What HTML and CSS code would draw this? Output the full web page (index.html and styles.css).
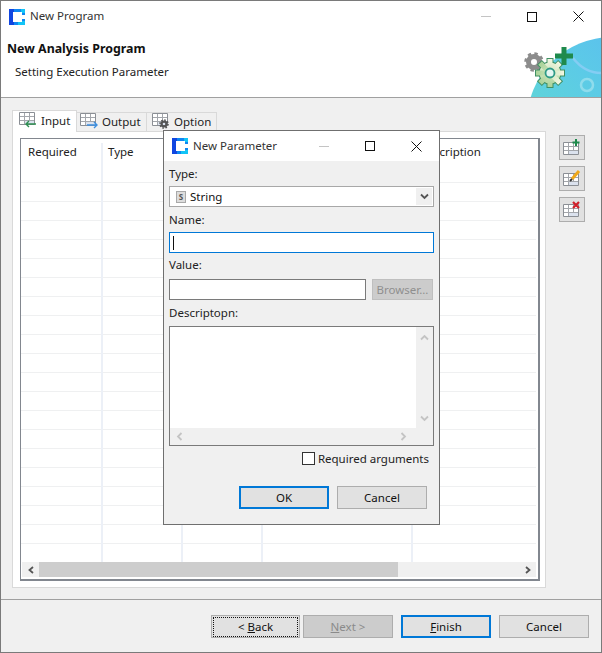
FILE: index.html

```html
<!DOCTYPE html>
<html>
<head>
	<meta charset="utf-8">
	<title>New Program</title>
	<link rel="stylesheet" href="styles.css">
</head>
<body>
<svg class="defs" width="0" height="0">
	<symbol id="logo" viewBox="0 0 16 16">
		<rect width="16" height="16" fill="#0f86f2"/>
		<path d="M0 0h5v4H4v8h1v4H0z" fill="#1146e0"/>
		<path d="M9 12h7v4H9zM12 0h4v4h-4z" fill="#12c4f6"/>
		<path d="M4 3h9v3h3v4h-3v3H4z" fill="#fff"/>
	</symbol>
	<symbol id="grid" viewBox="0 0 16 14">
		<path d="M.5.5h15v12H.5z" fill="#fff" stroke="#8b8f95"/>
		<path d="M1 4.500h14M1 8.500h14M5.500 1v11M10.500 1v11" stroke="#a3a6ab"/>
		<path d="M6 9h9v3H6z" fill="#dbe2ee"/>
	</symbol>
	<g id="cog">
		<circle cx="29" cy="41" r="10.500"/>
		<rect x="26.500" y="27" width="5" height="28"/>
		<rect x="26.500" y="27" width="5" height="28" transform="rotate(45 29 41)"/>
		<rect x="26.500" y="27" width="5" height="28" transform="rotate(90 29 41)"/>
		<rect x="26.500" y="27" width="5" height="28" transform="rotate(135 29 41)"/>
	</g>
</svg>
<div class="window">
	<div class="titlebar">
		<svg class="logo"><use href="#logo"/></svg>
		<span class="title">New Program</span>
		<span class="ctrl ctrl-min"><i></i></span>
		<span class="ctrl ctrl-max"><i></i></span>
		<span class="ctrl ctrl-close">
			<svg width="11" height="11" viewBox="0 0 11 11"><path d="M.5.5l10 10M10.500.5l-10 10" stroke="#111" fill="none"/></svg>
		</span>
	</div>
	<div class="banner">
		<div class="banner-text">
			<h1>New Analysis Program</h1>
			<p>Setting Execution Parameter</p>
		</div>
		<svg class="banner-art" width="80" height="66" viewBox="0 0 80 66">
			<defs>
				<linearGradient id="sky" x1="0" y1="1" x2="1" y2="0">
					<stop offset="0" stop-color="#62e0c8"/>
					<stop offset="0.55" stop-color="#5ccbe6"/>
					<stop offset="1" stop-color="#5ab6f6"/>
				</linearGradient>
				<linearGradient id="leaf" gradientUnits="userSpaceOnUse" x1="0" y1="27" x2="0" y2="55">
					<stop offset="0" stop-color="#f2f7e2"/>
					<stop offset="1" stop-color="#a8d298"/>
				</linearGradient>
			</defs>
			<circle cx="91" cy="90" r="85" fill="url(#sky)"/>
			<circle cx="66" cy="53" r="6" fill="none" stroke="#8fdcec" stroke-width="2.500"/>
			<path d="M52 26c7 9 16 15 28 15" fill="none" stroke="#84cdf3" stroke-width="2.500"/>
			<circle cx="13" cy="30" r="5.500" fill="none" stroke="#8c8c8c" stroke-width="5"/>
			<circle cx="13" cy="30" r="8" fill="none" stroke="#8c8c8c" stroke-width="3.500" stroke-dasharray="3.200 3.100"/>
			<use href="#cog" fill="#3f8f63" stroke="#3f8f63" stroke-width="2"/>
			<use href="#cog" fill="url(#leaf)"/>
			<circle cx="29" cy="41" r="4.500" fill="#e4f6f2" stroke="#2e9a86" stroke-width="1.800"/>
			<path d="M34 24h18M43 15v18" stroke="#1f8a4c" stroke-width="5" fill="none"/>
		</svg>
	</div>
	<div class="content">
		<div class="folder">
			<div class="tabs">
				<div class="tab tab-on">
					<svg class="tab-icon" viewBox="0 0 18 16">
						<use href="#grid" width="16" height="14"/>
						<path d="M17 12H7M10 9l-3 3 3 3" fill="none" stroke="#2f8f52" stroke-width="1.400"/>
					</svg>Input</div>
				<div class="tab">
					<svg class="tab-icon" viewBox="0 0 18 16">
						<use href="#grid" width="16" height="14"/>
						<path d="M7 12h10M14 9l3 3-3 3" fill="none" stroke="#3d8fe0" stroke-width="1.400"/>
					</svg>Output</div>
				<div class="tab tab-opt">
					<svg class="tab-icon" viewBox="0 0 18 16">
						<use href="#grid" width="16" height="14"/>
						<circle cx="12" cy="11" r="2.400" fill="none" stroke="#555" stroke-width="2.200"/>
						<circle cx="12" cy="11" r="4" fill="none" stroke="#555" stroke-width="1.600" stroke-dasharray="1.600 1.500"/>
					</svg>Option</div>
			</div>
			<div class="panel">
				<div class="table">
					<div class="table-cols">
						<div class="col col-a"><span class="th">Required</span></div>
						<div class="col col-b"><span class="th">Type</span></div>
						<div class="col col-c"></div>
						<div class="col col-d"></div>
						<div class="col col-e"><span class="th">Description</span></div>
					</div>
					<div class="hscroll">
						<span class="arrow">
							<svg width="8" height="8" viewBox="0 0 8 8"><path d="M6 1L2.500 4 6 7" fill="none" stroke="#555" stroke-width="1.800"/></svg>
						</span>
						<span class="track"><span class="thumb"></span></span>
						<span class="arrow">
							<svg width="8" height="8" viewBox="0 0 8 8"><path d="M2 1l3.500 3L2 7" fill="none" stroke="#555" stroke-width="1.800"/></svg>
						</span>
					</div>
				</div>
			</div>
		</div>
		<div class="side">
			<button class="side-btn">
				<svg width="18" height="17" viewBox="0 0 18 17">
					<use href="#grid" y="3" width="16" height="14"/>
					<path d="M13 0v7M9.500 3.500h7" stroke="#1f8a4c" stroke-width="2"/>
				</svg>
			</button>
			<button class="side-btn">
				<svg width="18" height="17" viewBox="0 0 18 17">
					<use href="#grid" y="3" width="16" height="14"/>
					<path d="M16 1L9 9" stroke="#f0a818" stroke-width="3"/>
					<path d="M9 9l-2 2" stroke="#333" stroke-width="2"/>
				</svg>
			</button>
			<button class="side-btn">
				<svg width="18" height="17" viewBox="0 0 18 17">
					<use href="#grid" y="3" width="16" height="14"/>
					<path d="M10 1l6 6M16 1l-6 6" stroke="#d0202a" stroke-width="2.200"/>
				</svg>
			</button>
		</div>
	</div>
	<div class="footer">
		<button class="btn btn-back"><span class="dots">&lt; <u>B</u>ack</span></button>
		<button class="btn btn-off"><span><u>N</u>ext &gt;</span></button>
		<button class="btn btn-main"><span><u>F</u>inish</span></button>
		<button class="btn"><span>Cancel</span></button>
	</div>

	<div class="dialog">
		<div class="dialog-title">
			<svg class="logo"><use href="#logo"/></svg>
			<span class="title">New Parameter</span>
			<span class="ctrl ctrl-min"><i></i></span>
			<span class="ctrl ctrl-max"><i></i></span>
			<span class="ctrl ctrl-close">
				<svg width="11" height="11" viewBox="0 0 11 11"><path d="M.5.5l10 10M10.500.5l-10 10" stroke="#111" fill="none"/></svg>
			</span>
		</div>
		<div class="dialog-body">
			<label class="lbl">Type:</label>
			<div class="combo">
				<span class="type-s">S</span>
				<span>String</span>
				<span class="combo-arrow">
					<svg width="9" height="7" viewBox="0 0 9 7"><path d="M1 1.500l3.500 3.500L8 1.500" fill="none" stroke="#555" stroke-width="1.800"/></svg>
				</span>
			</div>
			<label class="lbl">Name:</label>
			<div class="field field-on"><i class="caret"></i></div>
			<label class="lbl lbl-value">Value:</label>
			<div class="value-row">
				<div class="field field-value"></div>
				<button class="browse">Browser...</button>
			</div>
			<label class="lbl lbl-desc">Descriptopn:</label>
			<div class="memo">
				<div class="memo-top">
					<div class="memo-text"></div>
					<div class="memo-v">
						<svg width="9" height="7" viewBox="0 0 9 7"><path d="M1 5.500L4.500 2 8 5.500" fill="none" stroke="#c4c4c4" stroke-width="1.800"/></svg>
						<svg width="9" height="7" viewBox="0 0 9 7"><path d="M1 1.500L4.500 5 8 1.500" fill="none" stroke="#c4c4c4" stroke-width="1.800"/></svg>
					</div>
				</div>
				<div class="memo-h">
					<svg width="7" height="9" viewBox="0 0 7 9"><path d="M5.500 1L2 4.500 5.500 8" fill="none" stroke="#c4c4c4" stroke-width="1.800"/></svg>
					<svg width="7" height="9" viewBox="0 0 7 9"><path d="M1.500 1L5 4.500 1.500 8" fill="none" stroke="#c4c4c4" stroke-width="1.800"/></svg>
				</div>
			</div>
			<div class="check-row"><i class="check"></i>Required arguments</div>
			<div class="dialog-btns">
				<button class="btn btn-main"><span>OK</span></button>
				<button class="btn"><span>Cancel</span></button>
			</div>
		</div>
	</div>
</div>
</body>
</html>
```

FILE: styles.css

```css
*
{
	box-sizing: border-box;
}
html, body
{
	margin: 0;
	padding: 0;
	background: #f0f0f0;
}
body
{
	font-family: "Noto Sans", "Open Sans", sans-serif;
	font-size: 11.5px;
	color: #111;
}
.defs
{
	position: absolute;
}
.window
{
	position: relative;
	width: 602px;
	height: 653px;
	border: 1px solid #7a7a7a;
	background: #f0f0f0;
	display: flex;
	flex-direction: column;
	overflow: hidden;
}
.titlebar
{
	height: 31px;
	background: #fff;
	display: flex;
	align-items: center;
	padding-left: 8px;
	flex: none;
}
.logo
{
	width: 16px;
	height: 16px;
	flex: none;
}
.title
{
	margin-left: 5px;
	margin-bottom: 2px;
	color: #333;
	flex: 1;
}
.ctrl
{
	width: 46px;
	height: 30px;
	display: flex;
	align-items: center;
	justify-content: center;
	flex: none;
}
.ctrl-min i
{
	width: 10px;
	height: 1px;
	background: #c4c4c4;
}
.ctrl-max i
{
	width: 10px;
	height: 10px;
	border: 1px solid #111;
}
.banner
{
	height: 66px;
	background: #fff;
	border-bottom: 1px solid #a0a0a0;
	position: relative;
	flex: none;
	overflow: hidden;
}
.banner-text h1
{
	margin: 8px 0 0 6px;
	font-size: 12.4px;
	line-height: 18px;
	font-weight: 700;
	color: #111;
}
.banner-text p
{
	margin: 5px 0 0 14px;
	line-height: 17px;
	color: #222;
}
.banner-art
{
	position: absolute;
	right: 0;
	top: 0;
}
.content
{
	flex: 1;
	display: flex;
	padding: 12px 16px 0 11px;
}
.folder
{
	width: 534px;
	display: flex;
	flex-direction: column;
}
.tabs
{
	display: flex;
	align-items: flex-end;
	height: 22px;
	margin-bottom: -1px;
	position: relative;
	z-index: 1;
}
.tab
{
	height: 20px;
	padding: 0 0 2px 3px;
	display: flex;
	align-items: center;
	gap: 4px;
	border: 1px solid #d9d9d9;
	border-left: 0;
	background: #f0f0f0;
	width: 70px;
	white-space: nowrap;
	color: #222;
}
.tab-on
{
	height: 22px;
	width: 65px;
	background: #fff;
	border-left: 1px solid #d9d9d9;
	border-bottom: 0;
	padding-left: 6px;
	padding-bottom: 3px;
}
.tab-opt
{
	padding-left: 5px;
}
.tab-icon
{
	width: 18px;
	height: 16px;
	flex: none;
}
.panel
{
	height: 457px;
	background: #fff;
	border: 1px solid #d9d9d9;
	padding: 6px 5px 6px 7px;
}
.table
{
	height: 100%;
	border: 1px solid #82878f;
	border-width: 1px 2px 2px 1px;
	display: flex;
	flex-direction: column;
	padding: 0 2px 0 0;
}
.table-cols
{
	flex: 1;
	display: flex;
	background:
		repeating-linear-gradient(to bottom, transparent 0 18px, #eff0f1 18px 19px) 0 25px / 100% 100% no-repeat #fff;
	min-height: 0;
}
.col
{
	border-right: 2px solid #ecf0f7;
	margin-top: 4px;
	height: 419px;
	padding: 0 0 0 7px;
	flex: none;
}
.th
{
	color: #222;
	line-height: 17px;
}
.col-a
{
	width: 82px;
}
.col-b
{
	width: 80px;
	padding-left: 5px;
}
.col-c
{
	width: 80px;
}
.col-d
{
	width: 150px;
}
.col-e
{
	flex: 1;
	border-right: 0;
	padding-left: 6px;
}
.hscroll
{
	height: 15px;
	background: #f0f0f0;
	display: flex;
	flex: none;
	margin: 0 0 2px 1px;
}
.arrow
{
	width: 17px;
	display: flex;
	align-items: center;
	justify-content: center;
	flex: none;
}
.track
{
	flex: 1;
	display: block;
}
.thumb
{
	display: block;
	width: 359px;
	height: 100%;
	background: #cdcdcd;
}
.side
{
	margin-left: 13px;
	padding-top: 25px;
	display: flex;
	flex-direction: column;
	gap: 6px;
}
.side-btn
{
	width: 26px;
	height: 25px;
	padding: 0;
	background: #e1e1e1;
	border: 1px solid #adadad;
	display: flex;
	align-items: center;
	justify-content: center;
}
.footer
{
	height: 53px;
	border-top: 1px solid #a0a0a0;
	display: flex;
	padding: 15px 11px 0 210px;
	gap: 3px;
	flex: none;
}
.btn
{
	width: 90px;
	height: 23px;
	padding: 0;
	font: inherit;
	color: #111;
	background: #e1e1e1;
	border: 1px solid #adadad;
}
.btn span
{
	display: block;
	line-height: 20px;
}
.btn-back
{
	width: 89px;
	padding: 1px;
}
.btn-back .dots
{
	line-height: 18px;
	border: 1px dotted #111;
}
.btn-off
{
	background: #cccccc;
	color: #8a8a8a;
}
.btn-main
{
	border: 2px solid #0078d7;
}
.footer .btn-main
{
	margin-left: 5px;
	margin-right: 5px;
}
.dialog
{
	position: absolute;
	left: 162px;
	top: 129px;
	width: 277px;
	height: 395px;
	background: #f0f0f0;
	border: 1px solid #6f6f6f;
	z-index: 2;
}
.dialog-title
{
	height: 30px;
	background: #fff;
	display: flex;
	align-items: center;
	padding-left: 8px;
}
.dialog-body
{
	padding: 3px 5px 0;
}
.lbl
{
	display: block;
	height: 22px;
	line-height: 19px;
	color: #222;
}
.lbl-value
{
	height: 24px;
}
.lbl-desc
{
	height: 23px;
}
.combo
{
	width: 265px;
	height: 21px;
	background: #fff;
	border: 1px solid #a8a8a8;
	display: flex;
	align-items: center;
	padding-left: 6px;
	gap: 4px;
	position: relative;
	margin-bottom: 3px;
}
.type-s
{
	width: 10px;
	height: 12px;
	background: #ddd;
	border: 1px solid #a9a9a9;
	font-size: 8px;
	line-height: 10px;
	font-weight: 700;
	text-align: center;
	color: #555;
}
.combo-arrow
{
	position: absolute;
	right: 1px;
	top: 1px;
	width: 16px;
	height: 17px;
	background: #f0f0f0;
	display: flex;
	align-items: center;
	justify-content: center;
}
.field
{
	width: 265px;
	height: 21px;
	background: #fff;
	border: 1px solid #7a7a7a;
	margin-bottom: 2px;
	display: flex;
	align-items: center;
	padding-left: 3px;
}
.field-on
{
	border-color: #0078d7;
}
.caret
{
	width: 1px;
	height: 14px;
	background: #111;
}
.value-row
{
	display: flex;
	gap: 6px;
	margin-bottom: 3px;
}
.field-value
{
	width: 197px;
	margin: 0;
}
.browse
{
	width: 61px;
	height: 21px;
	padding: 0;
	font: inherit;
	color: #8f8f8f;
	background: #cccccc;
	border: 1px solid #bfbfbf;
}
.memo
{
	width: 265px;
	height: 120px;
	border: 1px solid #7a7a7a;
	background: #f0f0f0;
	display: flex;
	flex-direction: column;
}
.memo-top
{
	flex: 1;
	display: flex;
	min-height: 0;
}
.memo-text
{
	flex: 1;
	background: #fff;
}
.memo-v
{
	width: 17px;
	display: flex;
	flex-direction: column;
	justify-content: space-between;
	align-items: center;
	padding: 7px 0 6px;
}
.memo-h
{
	height: 17px;
	margin-right: 17px;
	display: flex;
	justify-content: space-between;
	align-items: center;
	padding: 0 9px 0 6px;
}
.check-row
{
	display: flex;
	align-items: center;
	justify-content: flex-end;
	gap: 3px;
	height: 14px;
	margin-top: 5px;
	padding-right: 5px;
	color: #222;
}
.check
{
	width: 13px;
	height: 13px;
	background: #fff;
	border: 1px solid #333;
}
.dialog-btns
{
	display: flex;
	gap: 8px;
	margin-top: 21px;
	padding-left: 70px;
}
```
